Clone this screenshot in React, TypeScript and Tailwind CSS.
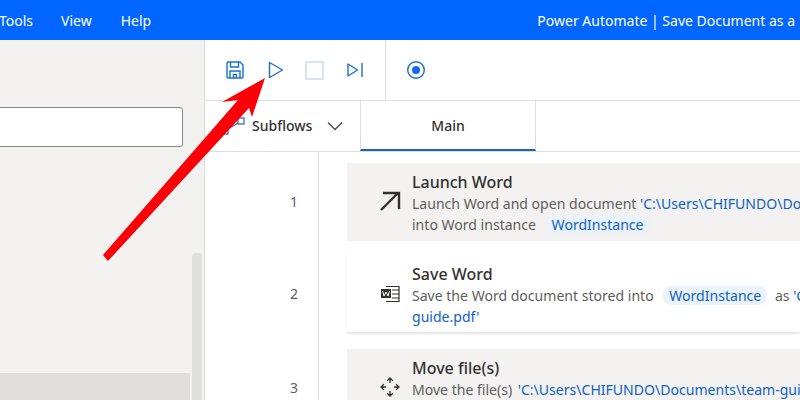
const font = "[font-family:'Noto_Sans','Open_Sans',sans-serif]";

function Pill({ children }: { children: string }) {
  return <span className="ml-[6px] mr-[4px] rounded-[8px] bg-[#eaf2fb] px-[6px] text-[#0f62c4]">{children}</span>;
}

function Step({
  title,
  icon,
  lines,
  shaded,
  className,
  iconHeight,
}: {
  title: string;
  icon: React.ReactNode;
  lines: React.ReactNode[];
  shaded?: boolean;
  className: string;
  iconHeight: string;
}) {
  return (
    <div className={`flex shrink-0 items-start ${shaded ? "bg-[#f3f2f1] shadow-[0_1px_1px_rgba(0,0,0,0.05)]" : "bg-white shadow-[0_2px_2px_rgba(0,0,0,0.10)]"} ${className}`}>
      <div className={`flex w-[65px] shrink-0 items-center justify-center pl-[20px] ${iconHeight}`}>{icon}</div>
      <div className="min-w-0 flex-1 overflow-hidden">
        <div className="text-[16px] leading-[23px] font-medium text-[#323130]">{title}</div>
        {lines.map((l, i) => (
          <div key={i} className="text-[14.05px] leading-[20.5px] whitespace-nowrap text-[#605e5c]">
            {l}
          </div>
        ))}
      </div>
    </div>
  );
}

export default function App() {
  return (
    <div className={`relative flex h-[400px] w-[800px] flex-col overflow-hidden bg-white ${font}`}>
      <header className="flex h-10 shrink-0 items-center justify-between bg-[#0066ff] text-[14px] text-white">
        <nav className="flex -ml-[1px] gap-[28px]">
          <span>Tools</span>
          <span>View</span>
          <span className="ml-[1px]">Help</span>
        </nav>
        <span className="whitespace-nowrap pr-[5px]">Power Automate | Save Document as a</span>
      </header>

      <div className="flex min-h-0 flex-1">
        <aside className="flex w-[205px] shrink-0 flex-col border-r border-[#dddcdb] bg-[#f3f2f1]">
          <div className="-ml-[4px] mt-[67px] h-[40px] w-[187px] shrink-0 rounded-[3px] border border-[#8a8886] bg-white" />
          <div className="mt-[106px] flex min-h-0 flex-1">
            <div className="flex w-[190px] flex-col">
              <div className="h-[120px]" />
              <div className="flex-1 bg-[#e1dfdd]" />
            </div>
            <div className="ml-[2px] w-[10px] rounded-t-[3px] bg-[#e1dfdd]" />
          </div>
        </aside>

        <main className="flex min-w-0 flex-1 flex-col">
          <div className="flex h-[61px] shrink-0 border-b border-[#e1dfdd]">
            <div className="flex w-[181px] items-center border-r border-[#e1dfdd] pl-[20px]">
              <svg width="20" height="20" viewBox="0 0 20 20" fill="none" stroke="#1a6fc9" strokeWidth="1.4">
                <path d="M2 3.2C2 2.5 2.5 2 3.2 2H15l3 3v11.8c0 .7-.5 1.2-1.2 1.2H3.2C2.5 18 2 17.5 2 16.8z" />
                <path d="M5.5 2v5h8V2M5 18v-7h10v7M8.5 18v-3.5h3V18" />
              </svg>
              <svg width="16" height="18" viewBox="0 0 16 18" fill="none" stroke="#1a6fc9" strokeWidth="1.4" className="ml-[23px]">
                <path d="M1.5 1.5 14.5 9 1.5 16.5z" strokeLinejoin="round" />
              </svg>
              <div className="ml-[21px] h-[19px] w-[19px] border-2 border-[#d5e3f3]" />
              <svg width="18" height="18" viewBox="0 0 18 18" fill="none" stroke="#1a6fc9" strokeWidth="1.4" className="ml-[22px]">
                <path d="M2 3 11.5 9 2 15z" strokeLinejoin="round" />
                <path d="M16 2v14" />
              </svg>
            </div>
            <div className="flex items-center pl-[20px]">
              <svg width="20" height="20" viewBox="0 0 20 20" fill="none">
                <circle cx="10" cy="10" r="8.3" stroke="#1a6fc9" strokeWidth="1.4" />
                <circle cx="10" cy="10" r="4" fill="#0f6cf0" />
              </svg>
            </div>
          </div>

          <div className="flex h-[51px] shrink-0 border-b border-[#dcdbda]">
            <div className="flex w-[155px] items-center pb-[1px] pl-[16px]">
              <svg width="26" height="20" viewBox="0 0 26 20" fill="none" stroke="#3f6fa8" strokeWidth="1.3">
                <rect x="1" y="12" width="6" height="6" />
                <rect x="17" y="2" width="6" height="6" />
                <path d="M7 13 17 7" />
              </svg>
              <span className="ml-[5px] text-[14px] font-medium text-[#323130]">Subflows</span>
              <svg width="16" height="10" viewBox="0 0 16 10" fill="none" stroke="#484644" strokeWidth="1.3" className="ml-[15px]">
                <path d="M1 1.5 8 8.5 15 1.5" />
              </svg>
            </div>
            <div className="flex h-[50px] w-[176px] items-center justify-center border-x border-b-2 border-x-[#e1dfdd] border-b-[#1a63b8] text-[14px] font-medium text-[#323130]">
              Main
            </div>
          </div>

          <div className="flex min-h-0 flex-1">
            <div className="flex w-[114px] shrink-0 flex-col items-end border-r border-[#dcdbda] pr-[20px] text-[14px] text-[#605e5c]">
              <div className="mt-[40px] leading-[20px]">1</div>
              <div className="mt-[72px] leading-[20px]">2</div>
              <div className="mt-[74px] leading-[20px]">3</div>
            </div>
            <div className="flex min-w-0 flex-1 flex-col overflow-hidden pl-[28px] pt-[11px]">
              <Step
                title="Launch Word"
                shaded
                className="h-[77px] pt-[8px]"
                iconHeight="h-[60px]"
                icon={
                  <svg width="22" height="22" viewBox="0 0 22 22" fill="none" stroke="#323130" strokeWidth="2.4">
                    <path d="M2 20 19 3M4 3h16v16" />
                  </svg>
                }
                lines={[
                  <>
                    Launch Word and open document{" "}
                    <span className="text-[#0f62c4]">'C:\Users\CHIFUNDO\Documents</span>
                  </>,
                  <>
                    into Word instance <Pill>WordInstance</Pill>
                  </>,
                ]}
              />
              <Step
                title="Save Word"
                className="mt-[12px] h-[80px] pt-[11px]"
                iconHeight="h-[62px]"
                icon={
                  <svg width="20" height="18" viewBox="0 0 20 18" fill="none" stroke="#323130" strokeWidth="1.2">
                    <path d="M6 1.5h13v15H6M12 5h7M12 9h7M12 13h7" />
                    <rect x="1" y="4" width="10" height="9" fill="#323130" stroke="none" />
                    <path d="M2.5 6 4 11 6 7l2 4 1.5-5" stroke="#fff" strokeWidth="1" />
                  </svg>
                }
                lines={[
                  <>
                    Save the Word document stored into <Pill>WordInstance</Pill> as{" "}
                    <span className="text-[#0f62c4]">'C:\Users</span>
                  </>,
                  <span className="text-[#0f62c4]">guide.pdf'</span>,
                ]}
              />
              <Step
                title="Move file(s)"
                shaded
                className="mt-[17px] h-[80px] pt-[8px]"
                iconHeight="h-[60px]"
                icon={
                  <svg width="20" height="20" viewBox="0 0 20 20" fill="none" stroke="#323130" strokeWidth="1.3">
                    <path d="M10 2v4M7.200 3.800 10 1l2.800 2.800M10 18v-4M7.200 16.200 10 19l2.800-2.800M2 10h4M3.800 7.200 1 10l2.800 2.800M18 10h-4M16.200 7.200 19 10l-2.800 2.800" />
                  </svg>
                }
                lines={[
                  <>
                    Move the file(s){" "}
                    <span className="ml-[2px] text-[#0f62c4]">'C:\Users\CHIFUNDO\Documents\team-guide</span>
                  </>,
                ]}
              />
            </div>
          </div>
        </main>
      </div>

      <svg className="pointer-events-none absolute left-0 top-0" width="800" height="400" viewBox="0 0 800 400">
        <path d="M103 255 238 100 222 102 265 78 252 117 249 108 108 261z" fill="#fb0007" />
      </svg>
    </div>
  );
}
